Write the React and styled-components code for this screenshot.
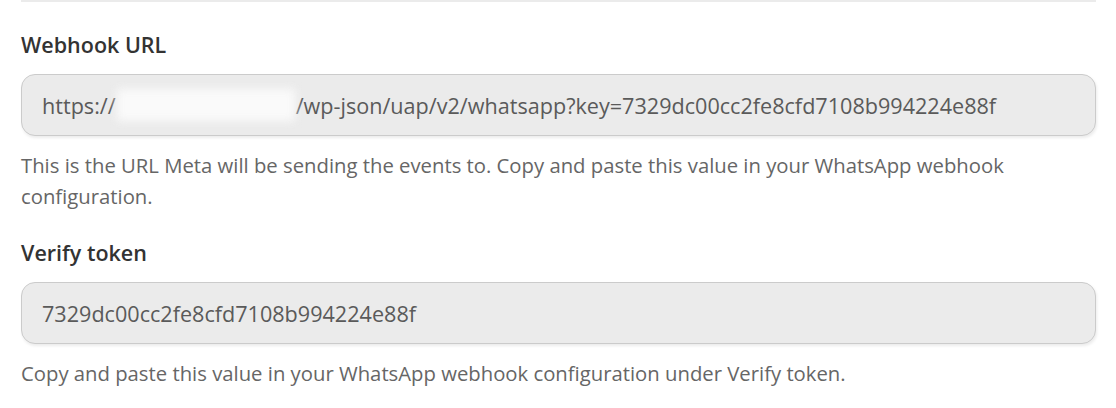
import React from "react";
import styled, { createGlobalStyle } from "styled-components";

const Global = createGlobalStyle`
  html, body { margin: 0; padding: 0; background: #ffffff; }
  body { font-family: "Open Sans", "Noto Sans", sans-serif; }
`;

const Page = styled.div`
  padding: 0 20px 0 21px;
  display: flex;
  flex-direction: column;
`;

const TopRule = styled.div`
  height: 2px;
  background: #ebebeb;
`;

const Field = styled.div`
  display: flex;
  flex-direction: column;
  margin-top: ${(p) => p.$top}px;
`;

const Label = styled.div`
  font-size: 21.5px;
  font-weight: 600;
  line-height: 28px;
  color: #333333;
`;

const Input = styled.div`
  margin-top: 15px;
  height: 62px;
  box-sizing: border-box;
  border: 1px solid #cbcbcb;
  border-radius: 14px;
  background: #ebebeb;
  box-shadow: 1px 2px 3px rgba(0, 0, 0, 0.08);
  display: flex;
  align-items: center;
  padding: 0 20px;
  font-size: 21.6px;
  color: #5a5a5a;
  white-space: nowrap;
  overflow: hidden;
`;

const Redacted = styled.span`
  display: inline-block;
  width: 178px;
  height: 32px;
  margin: 0 1px;
  background: #fafafa;
  filter: blur(5px);
  vertical-align: middle;
`;

const Help = styled.div`
  margin-top: 14px;
  font-size: 20.3px;
  line-height: 31px;
  color: #666666;
  max-width: 1050px;
`;

export default function App() {
  return (
    <>
      <Global />
      <Page>
        <TopRule />
        <Field $top={29}>
          <Label>Webhook URL</Label>
          <Input>
            https://<Redacted />/wp-json/uap/v2/whatsapp?key=7329dc00cc2fe8cfd7108b994224e88f
          </Input>
          <Help>
            This is the URL Meta will be sending the events to. Copy and paste this value in your WhatsApp webhook configuration.
          </Help>
        </Field>
        <Field $top={27}>
          <Label>Verify token</Label>
          <Input>7329dc00cc2fe8cfd7108b994224e88f</Input>
          <Help>Copy and paste this value in your WhatsApp webhook configuration under Verify token.</Help>
        </Field>
      </Page>
    </>
  );
}
